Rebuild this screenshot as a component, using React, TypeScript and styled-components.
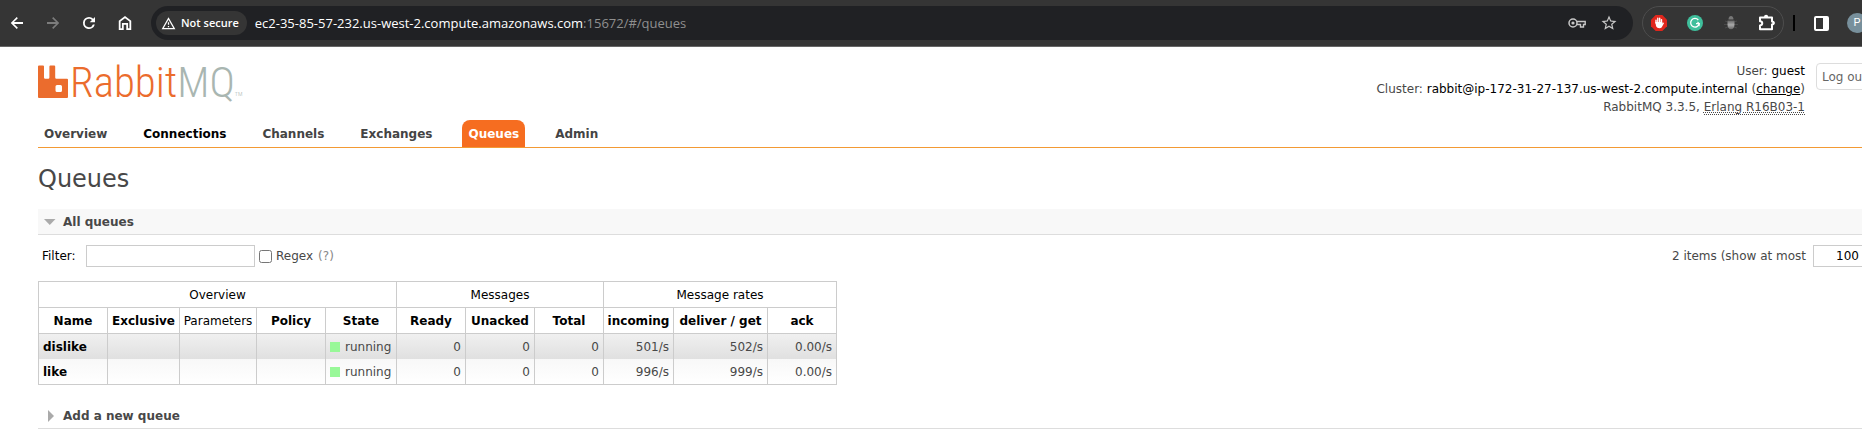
import React, { useState } from "react";
import styled, { createGlobalStyle, css } from "styled-components";

const GlobalStyle = createGlobalStyle`
  * { box-sizing: border-box; }
  body {
    margin: 0;
    background: #fff;
    color: #484848;
    font: 12px/18px Verdana, "DejaVu Sans", sans-serif;
    overflow-x: hidden;
  }
  button, input { font: inherit; }
`;

/* ---------- Browser toolbar ---------- */

const Toolbar = styled.header`
  display: flex;
  align-items: center;
  height: 47px;
  padding-left: 5px;
  background: #353535;
  border-bottom: 1px solid #666;
  overflow: hidden;
`;

const NavButtons = styled.div`
  display: flex;
  gap: 12px;
  margin-right: 14px;
`;

const IconButton = styled.button<{ $size?: number }>`
  display: grid;
  place-items: center;
  flex: none;
  width: ${(p) => p.$size ?? 24}px;
  height: 24px;
  padding: 0;
  border: 0;
  background: none;
  color: #fff;

  &:disabled { color: #7c7c7c; }
`;

const Omnibox = styled.div`
  display: flex;
  flex: 1;
  align-items: center;
  height: 34px;
  padding: 0 12px 0 5px;
  border-radius: 17px;
  background: #202124;
  color: #c7c7c7;
  font-family: "Segoe UI", "Open Sans", sans-serif;
`;

const SecurityChip = styled.button`
  display: flex;
  align-items: center;
  gap: 5px;
  height: 24px;
  padding: 0 8px 0 5px;
  border: 0;
  border-radius: 12px;
  background: #353535;
  color: #fff;
  font-size: 11px;
  font-weight: 600;
  white-space: nowrap;
`;

const Address = styled.div`
  flex: 1;
  margin-left: 8px;
  color: #8f8f8f;
  font-size: 13px;
  white-space: nowrap;
`;

const Host = styled.span`
  color: #fff;
`;

const OmniboxActions = styled.div`
  display: flex;
  gap: 8px;

  button { color: #c7c7c7; }
`;

const Extensions = styled.div`
  display: flex;
  flex: none;
  align-items: center;
  gap: 12px;
  height: 34px;
  margin-left: 9px;
  padding: 0 4px;
  border: 1px solid #4d4d4d;
  border-radius: 17px;
`;

const Divider = styled.span`
  flex: none;
  width: 2px;
  height: 16px;
  margin: 0 17px 0 9px;
  background: #000;
`;

const Avatar = styled.button`
  flex: none;
  width: 20px;
  height: 20px;
  margin: 0 -5px 0 17px;
  padding: 0;
  border: 0;
  border-radius: 50%;
  background: #78909c;
  color: #fff;
  font: 11px/20px Roboto, sans-serif;
`;

/* ---------- Page header ---------- */

const Page = styled.div`
  margin-right: -60px;
  padding-left: 38px;
`;

const PageHeader = styled.div`
  display: flex;
  justify-content: space-between;
  height: 73px;
`;

const Logo = styled.a`
  display: flex;
  align-items: flex-start;
  height: 33px;
  margin-top: 18px;
  color: #eb6c2d;
  font: 300 43px/34px "Roboto Condensed", sans-serif;
  text-decoration: none;

  svg { margin-right: 2px; }
`;

const LogoSuffix = styled.span`
  color: #a9b6b1;
`;

const Trademark = styled.small`
  align-self: flex-end;
  color: #a9b6b1;
  font-size: 6px;
  line-height: 8px;
`;

const Account = styled.div`
  display: flex;
  align-items: flex-start;
  gap: 11px;
  width: 562px;
  padding-top: 15px;
`;

const AccountDetails = styled.div`
  width: 445px;
  text-align: right;
  white-space: nowrap;

  b { color: #000; font-weight: normal; }
`;

const ChangeLink = styled.a`
  color: #000;
`;

const Abbr = styled.abbr`
  border-bottom: 1px dotted #484848;
  text-decoration: underline dotted;
`;

const LogOut = styled.button`
  height: 27px;
  width: 72px;
  margin-top: 1px;
  padding: 0 5px;
  border: 1px solid #ddd;
  border-radius: 4px;
  background: #fff;
  color: #666;
  text-align: left;
`;

const Tabs = styled.nav`
  display: flex;
  gap: 24px;
  height: 28px;
  border-bottom: 1px solid #f39a34;
`;

const Tab = styled.a<{ $state?: "hover" | "selected" }>`
  padding: 5px 6px 4px;
  border-radius: 8px 8px 0 0;
  color: #444;
  font-weight: bold;
  text-decoration: none;

  ${(p) => p.$state === "hover" && css`color: #000;`}
  ${(p) => p.$state === "selected" && css`
    background: #f66d20;
    color: #fff;
  `}
`;

/* ---------- Content ---------- */

const Title = styled.h1`
  margin: 17px 0 15px;
  font-size: 24px;
  font-weight: normal;
  line-height: 29px;
`;

const SectionHeading = styled.h2`
  margin: 0;
  font-size: 12px;
`;

const SectionToggle = styled.button<{ $open: boolean }>`
  display: flex;
  align-items: center;
  gap: 7px;
  width: 100%;
  height: 26px;
  padding: 0 6px;
  border: 0;
  border-bottom: 1px solid #ddd;
  background: ${(p) => (p.$open ? "#f8f8f8" : "#fff")};
  color: #484848;
  font-weight: bold;
  text-align: left;
`;

const FilterBar = styled.div`
  display: flex;
  align-items: center;
  justify-content: space-between;
  height: 22px;
  margin: 10px 0 14px;
  padding-left: 4px;
`;

const FilterGroup = styled.div`
  display: flex;
  align-items: center;

  a { margin-left: 5px; color: #888; text-decoration: none; }
`;

const FilterLabel = styled.label`
  width: 44px;
  color: #000;
`;

const TextInput = styled.input<{ $width: number }>`
  width: ${(p) => p.$width}px;
  height: 22px;
  padding: 3px;
  border: 1px solid #ccc;
  background: #fff;
  color: #000;
`;

const Checkbox = styled.input`
  width: 13px;
  height: 13px;
  margin: 0 4px;
`;

const Pagination = styled.label`
  display: flex;
  align-items: center;
  gap: 7px;
  width: 250px;
  white-space: nowrap;

  input { text-align: right; }
`;

const QueueTable = styled.table`
  width: 799px;
  margin-bottom: 18px;
  border: solid #ccc;
  border-width: 1px 0 1px 1px;
  border-collapse: separate;
  border-spacing: 0;
  table-layout: fixed;
`;

const Th = styled.th<{ $plain?: boolean }>`
  height: 26px;
  padding: 0;
  border: solid #ccc;
  border-width: 0 1px 1px 0;
  color: #000;
  font-weight: ${(p) => (p.$plain ? "normal" : "bold")};
  text-align: center;
  white-space: nowrap;
`;

const Row = styled.tr<{ $alt: boolean }>`
  background: ${(p) =>
    p.$alt ? "linear-gradient(#f0f0f0, #e0e0e0)" : "linear-gradient(#f8f8f8, #fff)"};
`;

const Td = styled.td<{ $align?: "right" | "left" }>`
  height: 25px;
  padding: 0 4px;
  border-right: 1px solid #ccc;
  text-align: ${(p) => p.$align ?? "left"};
  white-space: nowrap;

  a { color: #000; font-weight: bold; text-decoration: none; }
`;

const Status = styled.span`
  display: flex;
  align-items: center;
  gap: 5px;

  &::before {
    content: "";
    width: 10px;
    height: 10px;
    background: #98f898;
  }
`;

const columns = [
  { name: "Name", width: 69 },
  { name: "Exclusive", width: 72 },
  { name: "Parameters", width: 77, plain: true },
  { name: "Policy", width: 69 },
  { name: "State", width: 71 },
  { name: "Ready", width: 69 },
  { name: "Unacked", width: 69 },
  { name: "Total", width: 69 },
  { name: "incoming", width: 70 },
  { name: "deliver / get", width: 94 },
  { name: "ack", width: 69 },
];

const queues = [
  { name: "dislike", state: "running", figures: ["0", "0", "0", "501/s", "502/s", "0.00/s"] },
  { name: "like", state: "running", figures: ["0", "0", "0", "996/s", "999/s", "0.00/s"] },
];

const tabs: { name: string; state?: "hover" | "selected" }[] = [
  { name: "Overview" },
  { name: "Connections", state: "hover" },
  { name: "Channels" },
  { name: "Exchanges" },
  { name: "Queues", state: "selected" },
  { name: "Admin" },
];

/* ---------- Icons ---------- */

const Glyph = ({ d, size = 18 }: { d: string; size?: number }) => (
  <svg width={size} height={size} viewBox="0 0 24 24" fill="currentColor" aria-hidden="true">
    <path d={d} />
  </svg>
);

const paths = {
  back: "M20 10.800H7.900l5.200-5.200L11.700 4l-8 8 8 8 1.500-1.600-5.200-5.200H20z",
  forward: "M12.300 4l-1.500 1.600 5.200 5.200H4v2.400h12l-5.200 5.200 1.500 1.600 8-8z",
  reload: "M17.650 6.350A7.960 7.960 0 0 0 12 4a8 8 0 1 0 7.730 10h-2.500A5.600 5.600 0 1 1 12 6.400c1.500 0 2.900.6 3.900 1.600L13 11h7V4z",
  home: "M12 2.500 3.700 9v12.300h6.600v-7h3.400v7h6.600V9zm0 3 5.900 4.600v8.800h-1.800v-7H7.900v7H6.100v-8.800z",
  warning: "M12 5.990 19.530 19H4.470zM12 2 1 21h22zm1 14h-2v2h2zm0-6h-2v4h2z",
  star: "m22 9.240-7.190-.62L12 2 9.190 8.630 2 9.240l5.460 4.730L5.820 21 12 17.270 18.180 21l-1.630-7.030zM12 15.400l-3.760 2.270 1-4.280-3.320-2.880 4.380-.38L12 6.100l1.710 4.040 4.380.38-3.320 2.880 1 4.280z",
};

const KeyIcon = () => (
  <svg width="18" height="12" viewBox="0 0 18 12" fill="none" stroke="currentColor" aria-hidden="true">
    <circle cx="5" cy="6" r="4" strokeWidth="1.5" />
    <circle cx="5" cy="6" r="1.6" fill="currentColor" stroke="none" />
    <path d="M9 4.5h8.200v3h-1.700v2.500h-3v-2.500H9" strokeWidth="1.4" />
  </svg>
);

const BlockerIcon = () => (
  <svg width="16" height="16" viewBox="0 0 16 16" aria-hidden="true">
    <path d="M4.700 0h6.600L16 4.700v6.600L11.300 16H4.700L0 11.300V4.700z" fill="#e0261c" />
    <path d="M5 8V5.200M6.800 7.500V3.300M8.700 7.500V3.300M10.500 8V4.600" stroke="#fff" strokeWidth="1.400" strokeLinecap="round" />
    <path d="M4.300 7h7v3.500c0 1.700-1 2.700-2.700 2.700-2 0-2.700-.6-3.500-1.900z" fill="#fff" />
    <path d="m10.700 10.500 1.500-2.200" stroke="#fff" strokeWidth="1.400" strokeLinecap="round" />
  </svg>
);

const WritingIcon = () => (
  <svg width="16" height="16" viewBox="0 0 16 16" fill="none" aria-hidden="true">
    <circle cx="8" cy="8" r="8" fill="#3fbf9c" />
    <path d="M11.300 5A4.300 4.300 0 1 0 12.200 8.600H9" stroke="#fff" strokeWidth="1.300" />
    <path d="m10.500 7 1.700 1.600-.2 2.500" stroke="#fff" strokeWidth="1.100" />
  </svg>
);

const BugIcon = () => (
  <svg width="14" height="16" viewBox="0 0 14 16" aria-hidden="true">
    <defs>
      <linearGradient id="bug" x2="0" y2="1">
        <stop stopColor="#666" />
        <stop offset=".5" stopColor="#aaa" />
        <stop offset="1" stopColor="#666" />
      </linearGradient>
    </defs>
    <path d="M1 6l3 1M13 6l-3 1M0 9.500h14M1 13l3-1M13 13l-3-1" stroke="#4a4a4a" />
    <path d="M4.500 4.500c0-4.600 5-4.600 5 0z" fill="#777" />
    <path d="M3.500 5.500h7v4.200c0 2.500-1.300 4.500-3.500 4.500s-3.500-2-3.500-4.500z" fill="url(#bug)" />
  </svg>
);

const PuzzleIcon = () => (
  <svg width="18" height="18" viewBox="0 0 18 18" fill="none" aria-hidden="true">
    <path d="M2 3.500h12v4c2.300-.2 2.300 3.300 0 3v4.800H2v-3.800c3-.3 3-4 0-4.200z" stroke="#fff" strokeWidth="2" strokeLinejoin="round" />
    <path d="M6 3a2.100 2.300 0 0 1 4.200 0zM14.500 7a2.100 2.100 0 0 1 0 4.200z" fill="#fff" />
  </svg>
);

const PanelIcon = () => (
  <svg width="15" height="15" viewBox="0 0 15 15" aria-hidden="true">
    <rect x="1" y="1" width="13" height="13" rx="1" fill="none" stroke="#fff" strokeWidth="2" />
    <path d="M9 1h5v13H9z" fill="#fff" />
  </svg>
);

const RabbitMark = () => (
  <svg width="30" height="33" viewBox="0 0 30 33" aria-hidden="true">
    <path
      fill="#eb6c2d"
      fillRule="evenodd"
      d="M1 .5h4a1 1 0 0 1 1 1V12.500a1.200 1.200 0 0 0 1.200 1.200h3a1.200 1.200 0 0 0 1.200-1.200V1.500a1 1 0 0 1 1-1h3.800a1 1 0 0 1 1 1V12.500a1.200 1.200 0 0 0 1.200 1.200H29a1 1 0 0 1 1 1V32a1 1 0 0 1-1 1H1a1 1 0 0 1-1-1V1.500a1 1 0 0 1 1-1zM19 20a1.500 1.500 0 0 0-1.500 1.500v4A1.500 1.500 0 0 0 19 27h3.500a1.500 1.500 0 0 0 1.500-1.500v-4a1.500 1.500 0 0 0-1.500-1.500z"
    />
  </svg>
);

const Triangle = ({ open }: { open: boolean }) => (
  <svg width="12" height="12" viewBox="0 0 12 12" fill="#aaa" aria-hidden="true">
    <path d={open ? "M0 3h11.500L5.750 9z" : "M4 0l6 6-6 6z"} />
  </svg>
);

const Section = ({ title, open, onToggle }: { title: string; open: boolean; onToggle: () => void }) => (
  <SectionHeading>
    <SectionToggle type="button" $open={open} aria-expanded={open} onClick={onToggle}>
      <Triangle open={open} />
      {title}
    </SectionToggle>
  </SectionHeading>
);

export default function App() {
  const [listOpen, setListOpen] = useState(true);
  const [addOpen, setAddOpen] = useState(false);

  return (
    <>
      <GlobalStyle />
      <Toolbar>
        <NavButtons>
          <IconButton aria-label="Back"><Glyph d={paths.back} /></IconButton>
          <IconButton aria-label="Forward" disabled><Glyph d={paths.forward} /></IconButton>
          <IconButton aria-label="Reload"><Glyph d={paths.reload} /></IconButton>
          <IconButton aria-label="Home"><Glyph d={paths.home} /></IconButton>
        </NavButtons>
        <Omnibox>
          <SecurityChip>
            <Glyph d={paths.warning} size={15} />
            Not secure
          </SecurityChip>
          <Address>
            <Host>ec2-35-85-57-232.us-west-2.compute.amazonaws.com</Host>:15672/#/queues
          </Address>
          <OmniboxActions>
            <IconButton aria-label="Passwords"><KeyIcon /></IconButton>
            <IconButton aria-label="Bookmark"><Glyph d={paths.star} /></IconButton>
          </OmniboxActions>
        </Omnibox>
        <Extensions>
          <IconButton aria-label="Ad blocker"><BlockerIcon /></IconButton>
          <IconButton aria-label="Writing assistant"><WritingIcon /></IconButton>
          <IconButton aria-label="Debugger"><BugIcon /></IconButton>
          <IconButton aria-label="Extensions"><PuzzleIcon /></IconButton>
        </Extensions>
        <Divider />
        <IconButton $size={18} aria-label="Side panel"><PanelIcon /></IconButton>
        <Avatar aria-label="Profile">P</Avatar>
      </Toolbar>

      <Page>
        <PageHeader>
          <Logo href="#/">
            <RabbitMark />
            Rabbit<LogoSuffix>MQ</LogoSuffix>
            <Trademark>TM</Trademark>
          </Logo>
          <Account>
            <AccountDetails>
              <div>User: <b>guest</b></div>
              <div>
                Cluster: <b>rabbit@ip-172-31-27-137.us-west-2.compute.internal</b> (
                <ChangeLink href="#/cluster-name">change</ChangeLink>)
              </div>
              <div>RabbitMQ 3.3.5, <Abbr>Erlang R16B03-1</Abbr></div>
            </AccountDetails>
            <LogOut type="button">Log out</LogOut>
          </Account>
        </PageHeader>
        <Tabs>
          {tabs.map((tab) => (
            <Tab key={tab.name} href={`#/${tab.name.toLowerCase()}`} $state={tab.state}>
              {tab.name}
            </Tab>
          ))}
        </Tabs>

        <main>
          <Title>Queues</Title>
          <Section title="All queues" open={listOpen} onToggle={() => setListOpen(!listOpen)} />
          {listOpen && (
            <>
              <FilterBar>
                <FilterGroup>
                  <FilterLabel htmlFor="filter">Filter:</FilterLabel>
                  <TextInput id="filter" $width={169} />
                  <Checkbox id="regex" type="checkbox" />
                  <label htmlFor="regex">Regex</label>
                  <a href="#/help">(?)</a>
                </FilterGroup>
                <Pagination>
                  2 items (show at most
                  <TextInput $width={50} defaultValue="100" />
                </Pagination>
              </FilterBar>
              <QueueTable>
                <colgroup>
                  {columns.map((c) => <col key={c.name} width={c.width} />)}
                </colgroup>
                <thead>
                  <tr>
                    <Th $plain colSpan={5}>Overview</Th>
                    <Th $plain colSpan={3}>Messages</Th>
                    <Th $plain colSpan={3}>Message rates</Th>
                  </tr>
                  <tr>
                    {columns.map((c) => <Th key={c.name} $plain={c.plain}>{c.name}</Th>)}
                  </tr>
                </thead>
                <tbody>
                  {queues.map((q, i) => (
                    <Row key={q.name} $alt={i % 2 === 0}>
                      <Td><a href={`#/queues/${q.name}`}>{q.name}</a></Td>
                      <Td />
                      <Td />
                      <Td />
                      <Td><Status>{q.state}</Status></Td>
                      {q.figures.map((f, n) => <Td key={n} $align="right">{f}</Td>)}
                    </Row>
                  ))}
                </tbody>
              </QueueTable>
            </>
          )}
          <Section title="Add a new queue" open={addOpen} onToggle={() => setAddOpen(!addOpen)} />
        </main>
      </Page>
    </>
  );
}
